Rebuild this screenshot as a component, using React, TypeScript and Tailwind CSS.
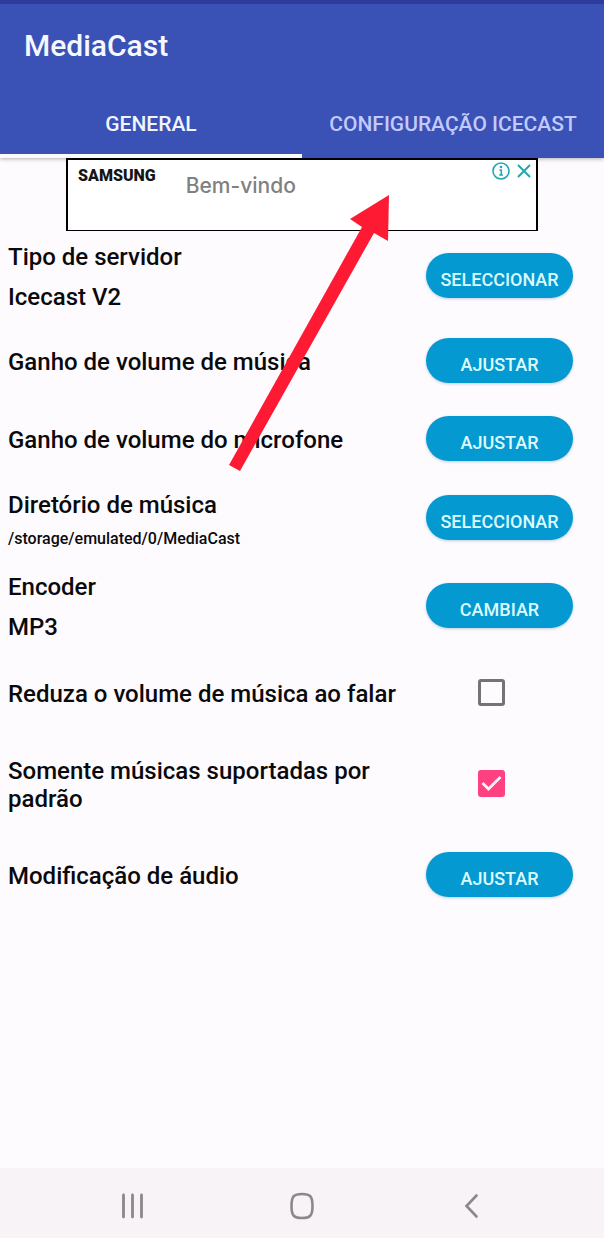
import { useState } from "react";
import type { ReactNode } from "react";

const textRow = "min-h-[92px]";
const singleRow = "min-h-[78px]";

type RowProps = {
  size: string;
  label: ReactNode;
  children: ReactNode;
};

function Row({ size, label, children }: RowProps) {
  return (
    <li className={`flex items-center pl-2 pr-[31px] py-1.5 ${size}`}>
      <div className="flex-1 text-2xl leading-7 font-medium text-[#0a0a0c]">
        {label}
      </div>
      <div className="w-[147px] shrink-0 pb-1">{children}</div>
    </li>
  );
}

function PillButton({ children }: { children: ReactNode }) {
  return (
    <button
      type="button"
      className="flex h-[45px] w-full items-center justify-center rounded-full bg-[#0499d1] pt-2.5 text-lg font-medium text-[#dcfbff] shadow-[0_1px_3px_rgba(60,120,160,0.35)]"
    >
      {children}
    </button>
  );
}

type CheckProps = {
  id: string;
  checked: boolean;
  onChange: (value: boolean) => void;
};

function Check({ id, checked, onChange }: CheckProps) {
  return (
    <div className="grid w-[131px] place-items-center">
      <input
        id={id}
        type="checkbox"
        checked={checked}
        onChange={(e) => onChange(e.target.checked)}
        className="peer col-start-1 row-start-1 size-[27px] appearance-none rounded-[3px] border-3 border-[#777277] checked:border-[#ff4081] checked:bg-[#ff4081]"
      />
      <svg
        viewBox="0 0 27 27"
        className="pointer-events-none invisible col-start-1 row-start-1 size-[27px] peer-checked:visible"
        fill="none"
        stroke="#fff0f8"
        strokeWidth="2.8"
      >
        <path d="M4.5 13 L10.5 19 L22.5 7" />
      </svg>
    </div>
  );
}

function AdBanner() {
  return (
    <aside className="relative mx-auto flex h-[73px] w-full max-w-[472px] items-start border-2 border-b border-black bg-white">
      <span className="pt-1.5 pl-2.5 text-base leading-5 font-black text-[#151515]">
        SAMSUNG
      </span>
      <span className="pt-3 pl-[30px] font-[Inter] text-[21px] leading-7 font-medium text-[#808080]">
        Bem-vindo
      </span>
      <div className="ml-auto flex gap-1.5 pt-0.5 pr-1">
        <button type="button" aria-label="Info">
          <svg viewBox="0 0 18 18" className="size-[18px]" fill="none" stroke="#22a7b5">
            <circle cx="9" cy="9" r="8" strokeWidth="1.6" />
            <path d="M7.4 8 H9.3 V13 M7.2 13 H11" strokeWidth="1.6" />
            <circle cx="9" cy="5" r="1.3" fill="#22a7b5" stroke="none" />
          </svg>
        </button>
        <button type="button" aria-label="Fechar">
          <svg viewBox="0 0 16 18" className="h-[18px] w-4" fill="none" stroke="#22a7b5" strokeWidth="2">
            <path d="M2 3 L14 15 M14 3 L2 15" />
          </svg>
        </button>
      </div>
    </aside>
  );
}

export default function App() {
  const [reduce, setReduce] = useState(false);
  const [supported, setSupported] = useState(true);

  return (
    <div className="relative flex min-h-screen flex-col bg-[#fefbff] font-[Roboto,sans-serif]">
      <header className="border-t-4 border-[#2f3b9c] bg-[#3a51b5] shadow-[0_1px_4px_rgba(0,0,0,0.3)]">
        <h1 className="px-6 pt-[22px] pb-6 text-3xl leading-10 font-medium text-[#f5f8ff]">
          MediaCast
        </h1>
        <nav className="grid grid-cols-2 text-center text-[21px] leading-7 font-medium">
          <a
            href="#general"
            className="border-b-4 border-[#fbfbff] pt-5 pb-4 text-[#f0f5ff]"
          >
            GENERAL
          </a>
          <a
            href="#icecast"
            className="border-b-4 border-transparent pt-5 pb-4 whitespace-nowrap text-[#c2caff]"
          >
            CONFIGURAÇÃO ICECAST
          </a>
        </nav>
      </header>

      <main className="relative flex-1">
        <AdBanner />
        <ul>
          <Row
            size={textRow}
            label={
              <>
                <p className="leading-10">Tipo de servidor</p>
                <p className="leading-10">Icecast V2</p>
              </>
            }
          >
            <PillButton>SELECCIONAR</PillButton>
          </Row>
          <Row size={singleRow} label="Ganho de volume de música">
            <PillButton>AJUSTAR</PillButton>
          </Row>
          <Row size={singleRow} label="Ganho de volume do microfone">
            <PillButton>AJUSTAR</PillButton>
          </Row>
          <Row
            size="min-h-[80px]"
            label={
              <>
                <p className="leading-10">Diretório de música</p>
                <p className="text-base leading-7">
                  /storage/emulated/0/MediaCast
                </p>
              </>
            }
          >
            <PillButton>SELECCIONAR</PillButton>
          </Row>
          <Row
            size="min-h-[96px]"
            label={
              <>
                <p className="leading-10">Encoder</p>
                <p className="leading-10">MP3</p>
              </>
            }
          >
            <PillButton>CAMBIAR</PillButton>
          </Row>
          <Row
            size={singleRow}
            label={
              <label htmlFor="reduce">Reduza o volume de música ao falar</label>
            }
          >
            <Check id="reduce" checked={reduce} onChange={setReduce} />
          </Row>
          <Row
            size="min-h-[104px]"
            label={
              <label htmlFor="supported">
                Somente músicas suportadas por padrão
              </label>
            }
          >
            <Check id="supported" checked={supported} onChange={setSupported} />
          </Row>
          <Row size={singleRow} label="Modificação de áudio">
            <PillButton>AJUSTAR</PillButton>
          </Row>
        </ul>

        {/* red arrow pointing at the banner */}
        <svg
          viewBox="0 0 161 276"
          className="pointer-events-none absolute top-[37px] left-[229px] h-[276px] w-[161px]"
          fill="#fe1a33"
        >
          <path d="M0 270 L133 32 L121 24 L160 0 L159 46 L145 38 L11 276 Z" />
        </svg>
      </main>

      <footer className="grid h-[70px] grid-cols-3 place-items-center bg-[#f7f3f7] px-12 pt-1.5">
        <button type="button" aria-label="Recentes">
          <svg viewBox="0 0 28 28" className="size-7" stroke="#8d878c" strokeWidth="2.8" strokeLinecap="round">
            <path d="M4.5 3 V25 M13.5 3 V25 M22.5 3 V25" />
          </svg>
        </button>
        <button type="button" aria-label="Início">
          <svg viewBox="0 0 28 28" className="size-7" fill="none" stroke="#8d878c" strokeWidth="2.6">
            <path d="M14 2 C22 2 24.5 4 24.5 14 C24.5 24 22 26 14 26 C6 26 3.5 24 3.5 14 C3.5 4 6 2 14 2 Z" />
          </svg>
        </button>
        <button type="button" aria-label="Voltar">
          <svg viewBox="0 0 28 28" className="size-7" fill="none" stroke="#8d878c" strokeWidth="2.6" strokeLinecap="round">
            <path d="M19.500 3.500 L9.500 14 L19.500 24.500" />
          </svg>
        </button>
      </footer>
    </div>
  );
}
